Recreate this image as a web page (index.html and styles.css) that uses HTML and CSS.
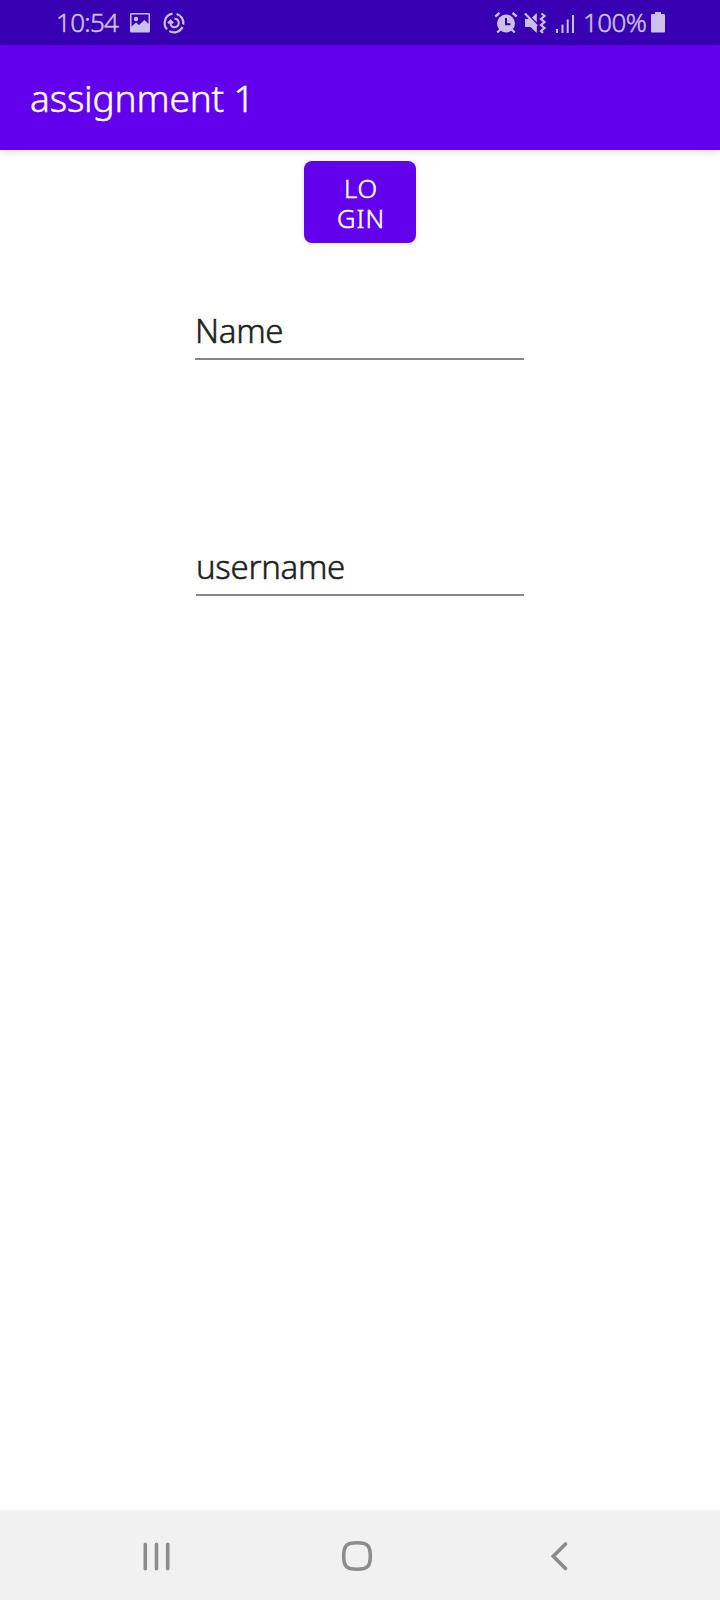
FILE: index.html
```html
<!DOCTYPE html>
<html lang="en">
<head>
<meta charset="utf-8">
<title>assignment 1</title>
<link rel="stylesheet" href="styles.css">
</head>
<body>
<div class="screen">
  <div class="status">
    <span class="time">10:54</span>
    <svg class="icon image-icon" width="22" height="22" viewBox="0 0 22 22">
      <path fill="currentColor" fill-rule="evenodd" d="M2.5 1h17Q21 1 21 2.5v16.5Q21 20.500 19.500 20.500h-17Q1 20.500 1 19V2.500Q1 1 2.500 1zM2.500 2.500V14.500L7 10.500l3 2.500 5.500-5 4 4V2.500z"/>
      <circle cx="7" cy="7" r="2.200" fill="currentColor"/>
    </svg>
    <svg class="icon swirl-icon" width="24" height="24" viewBox="0 0 24 24" fill="none" stroke="currentColor" stroke-width="2.200">
      <path d="M10.500 2.700A9.400 9.400 0 0 0 5 18.200M7.300 20.100A9.400 9.400 0 0 0 20.500 16M21.300 13.500A9.400 9.400 0 0 0 14.500 3"/>
      <path stroke-width="2" d="M12.500 7.800A4.200 4.200 0 1 1 8.600 13.500V10.500M6 12.300L8.600 9.700 11.200 12.300"/>
    </svg>
    <span class="space"></span>
    <svg class="icon alarm-icon" width="24" height="24" viewBox="0 0 24 24">
      <circle cx="12" cy="12.500" r="9" fill="currentColor"/>
      <path d="M1.300 5.500L5.500 1.800M22.700 5.500L18.500 1.800M3.300 21.500l3-3M20.700 21.500l-3-3" fill="none" stroke="currentColor" stroke-width="2.400"/>
      <path class="cutout" d="M12 7v6.300h4.500" fill="none" stroke-width="2"/>
    </svg>
    <svg class="icon mute-icon" width="24" height="24" viewBox="0 0 24 24">
      <path fill="currentColor" d="M2 8h4.500L13.800 15.300V22L7.500 16H2zM9 6.500L13.800 2v9.300z"/>
      <path d="M2 2.500L14 15M18.500 2.500l3 2.500-3.500 3 3.500 3-3.500 3 3.500 3-3.500 3 2 2" fill="none" stroke="currentColor" stroke-width="2.200"/>
    </svg>
    <svg class="icon signal-icon" width="20" height="22" viewBox="0 0 20 22">
      <path d="M2 17v4M7.500 12.500V21M12.700 7.500V21M18 3v18" stroke="currentColor" stroke-width="2"/>
    </svg>
    <span class="percent">100%</span>
    <svg class="icon battery-icon" width="14" height="21" viewBox="0 0 14 21">
      <path fill="currentColor" d="M4 0h6v2h3q1 0 1 1v16.500q0 1-1 1H1q-1 0-1-1V3q0-1 1-1h3z"/>
    </svg>
  </div>
  <header class="appbar"><h1>assignment 1</h1></header>
  <main class="content">
    <button class="login" type="button">LO<br>GIN</button>
    <div class="field name">Name</div>
    <div class="field user">username</div>
  </main>
  <nav class="navbar">
    <svg class="recents" width="30" height="32" viewBox="0 0 30 32">
      <path d="M3.300 4.300V28.700M14.500 4.300V28.700M25.700 4.300V28.700" fill="none" stroke="currentColor" stroke-width="3.600" stroke-linecap="round"/>
    </svg>
    <svg class="home" width="32" height="32" viewBox="0 0 32 32">
      <path d="M16 2.700C26.500 2.700 29.300 5.500 29.300 16S26.500 29.300 16 29.300 2.700 26.500 2.700 16 5.500 2.700 16 2.700z" fill="none" stroke="currentColor" stroke-width="3.600"/>
    </svg>
    <svg class="back" width="20" height="32" viewBox="0 0 20 32">
      <path d="M16.500 4L4.300 16.200 16.500 28.400" fill="none" stroke="currentColor" stroke-width="3.600" stroke-linecap="round"/>
    </svg>
  </nav>
</div>
</body>
</html>
```

FILE: styles.css
```css
body {
  margin: 0;
  font-family: "Noto Sans", sans-serif;
}

.screen {
  display: flex;
  flex-direction: column;
  width: 720px;
  height: 1600px;
  background: #fff;
  -webkit-text-stroke: 0.5px currentColor;
}

.status {
  display: flex;
  align-items: center;
  box-sizing: border-box;
  height: 45px;
  padding: 0 55px;
  background: #3700b3;
  color: #cdbfec;
}

.icon {
  flex: none;
  display: block;
}

.cutout {
  stroke: #3700b3;
}

.time,
.percent {
  font-size: 26px;
  font-weight: 300;
  line-height: 45px;
  white-space: nowrap;
}

.time {
  width: 73px;
  padding-left: 1px;
  letter-spacing: -0.7px;
}

.swirl-icon {
  margin-left: 11px;
}

.space {
  flex: 1;
}

.alarm-icon {
  margin-right: 5px;
}

.signal-icon {
  margin-left: 8px;
}

.percent {
  width: 68px;
  margin-left: 8px;
  letter-spacing: -0.6px;
}

.appbar {
  position: relative;
  height: 105px;
  background: #6200ee;
  box-shadow: 0 2px 7px rgba(0, 0, 0, 0.14);
}

h1 {
  margin: 0;
  padding-left: 30px;
  color: #fff;
  font-size: 37px;
  font-weight: 300;
  line-height: 106px;
  letter-spacing: -0.15px;
}

.content {
  flex: 1;
  display: flex;
  flex-direction: column;
  align-items: center;
}

.login {
  box-sizing: border-box;
  width: 112px;
  height: 82px;
  margin-top: 11px;
  padding: 1px 0 0 2px;
  border: 0;
  border-radius: 8px;
  background: #6200ee;
  box-shadow: 0 1px 5px rgba(0, 0, 0, 0.12);
  color: #fff;
  font: 300 25.5px/30px "Noto Sans", sans-serif;
  letter-spacing: 1px;
}

.field {
  box-sizing: border-box;
  width: 329px;
  height: 60px;
  border-bottom: 2px solid #858585;
  color: #212121;
  font-size: 33px;
  font-weight: 300;
  line-height: 62px;
  letter-spacing: -0.3px;
}

.name {
  margin: 57px 1px 0 0;
}

.user {
  width: 328px;
  margin-top: 176px;
}

.navbar {
  display: flex;
  align-items: center;
  height: 90px;
  padding-top: 2px;
  box-sizing: border-box;
  background: #f1f1f1;
  color: #8c8c8c;
}

.recents {
  margin-left: 142px;
}

.home {
  margin-left: 169px;
}

.back {
  margin-left: 176px;
}
```
